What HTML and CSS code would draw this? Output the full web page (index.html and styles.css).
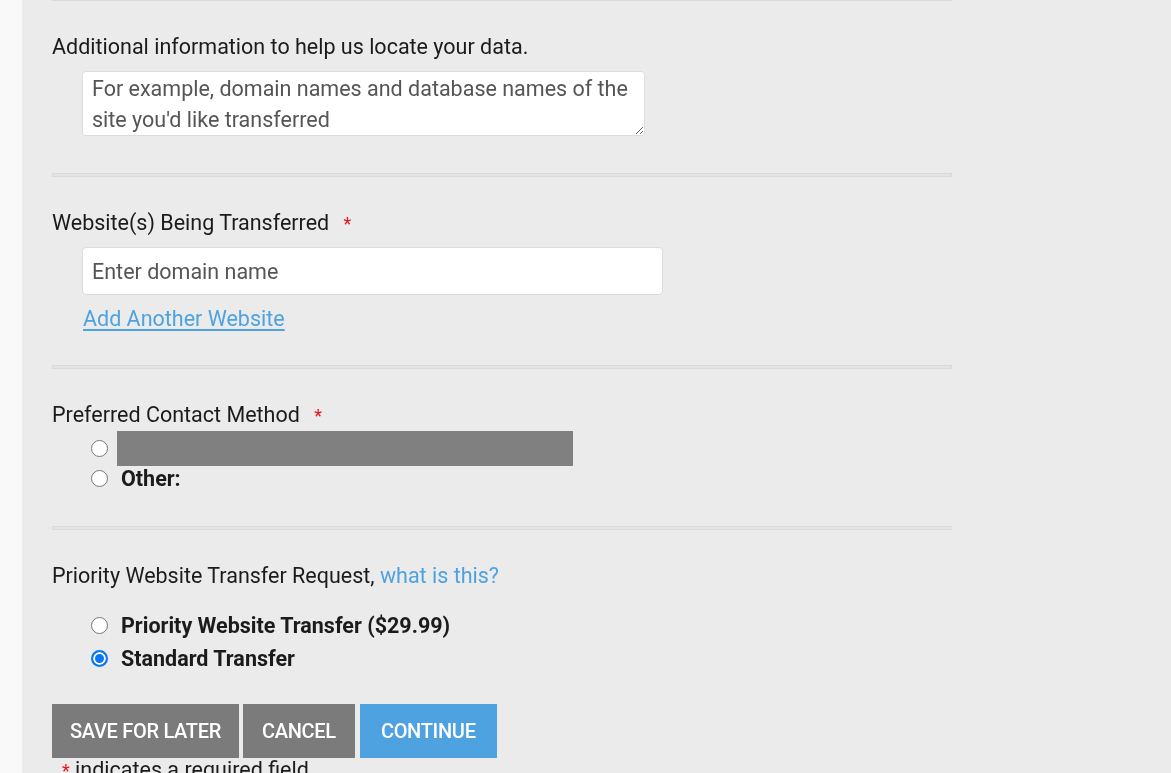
FILE: index.html
```html
<!doctype html>
<html>
<head>
    <link rel="stylesheet" href="styles.css">
</head>
<body>
    <div class="page">
        <div class="gutter"></div>
        <main class="panel">
            <hr class="rule rule-top">
            <section class="section section-first">
                <label class="field-label" for="notes">Additional information to help us locate your data.</label>
                <textarea id="notes" class="notes">For example, domain names and database names of the site you'd like transferred</textarea>
            </section>
            <hr class="rule">
            <section class="section section-site">
                <label class="field-label" for="domain">Website(s) Being Transferred <span class="req">*</span></label>
                <input id="domain" class="domain" type="text" placeholder="Enter domain name" />
                <a class="add-link" href="#">Add Another Website</a>
            </section>
            <hr class="rule">
            <section class="section">
                <div class="field-label">Preferred Contact Method <span class="req">*</span></div>
                <div class="options options-tight">
                    <label class="option"><input type="radio" name="contact" /><span class="redacted"></span></label>
                    <label class="option"><input type="radio" name="contact" /><span class="option-text">Other:</span></label>
                </div>
            </section>
            <hr class="rule">
            <section class="section section-last">
                <div class="field-label">Priority Website Transfer Request, <a class="help-link" href="#">what is this?</a></div>
                <div class="options options-spaced">
                    <label class="option"><input type="radio" name="priority" /><span class="option-text">Priority Website Transfer ($29.99)</span></label>
                    <label class="option"><input type="radio" name="priority" checked /><span class="option-text">Standard Transfer</span></label>
                </div>
                <div class="actions">
                    <button class="btn btn-gray" type="button">Save for later</button>
                    <button class="btn btn-gray" type="button">Cancel</button>
                    <button class="btn btn-blue" type="submit">Continue</button>
                </div>
                <p class="footnote"><span class="req">*</span> indicates a required field</p>
            </section>
        </main>
    </div>
</body>
</html>
```

FILE: styles.css
```css
html, body {
    margin: 0;
    height: 100%;
    overflow: hidden;
}
body {
    font-family: Roboto, "Liberation Sans", Arial, sans-serif;
    font-size: 21.5px;
    color: #1b1b1b;
    background: #ebebeb;
}
.page {
    display: flex;
    min-height: 100%;
}
.gutter {
    width: 22px;
    flex: none;
    background: #f9f9f9;
}
.panel {
    flex: 1;
    padding: 0 30px;
    background: #ebebeb;
}
.rule {
    width: 898px;
    height: 2px;
    margin: 0;
    border: 1px solid #dadada;
    background: #e4e4e4;
    box-sizing: content-box;
}
.rule-top {
    margin-top: -3px;
}
.section {
    width: 900px;
    padding: 34px 0 35px;
}
.section-first {
    padding-bottom: 37px;
}
.section-site {
    padding-bottom: 34px;
}
.section-site .field-label {
    margin-bottom: 11px;
}
.section-last {
    padding-bottom: 0;
}
.field-label {
    display: block;
    line-height: 24px;
    margin-bottom: 12px;
}
.req {
    color: #e8131a;
    margin-left: 9px;
    font-size: 18px;
}
.footnote .req {
    margin: 0;
}
.notes {
    display: block;
    box-sizing: border-box;
    width: 563px;
    height: 65px;
    margin-left: 30px;
    padding: 1px 9px;
    border: 1px solid #dcdcdc;
    border-radius: 4px;
    background: #fff;
    color: #555;
    font: inherit;
    line-height: 31px;
}
.domain {
    display: block;
    box-sizing: border-box;
    width: 581px;
    height: 48px;
    margin-left: 30px;
    padding: 0 9px;
    border: 1px solid #dcdcdc;
    border-radius: 4px;
    background: #fff;
    font: inherit;
    color: #555;
}
.domain::placeholder {
    color: #555;
}
.add-link {
    display: inline-block;
    margin: 12px 0 0 31px;
    line-height: 24px;
    color: #4ea3df;
    text-decoration: underline;
    text-decoration-thickness: 2px;
    text-underline-offset: 3px;
}
.help-link {
    color: #4ea3df;
    text-decoration: none;
}
.options {
    padding-left: 39px;
}
.options-tight {
    margin-top: -9px;
}
.options-spaced {
    margin-top: 21px;
}
.option {
    display: flex;
    align-items: center;
    min-height: 24px;
}
.options-spaced .option {
    height: 33px;
}
.option input {
    appearance: none;
    box-sizing: border-box;
    width: 17px;
    height: 17px;
    margin: 0 9px 0 0;
    flex: none;
    border: 1px solid #767676;
    border-radius: 50%;
    background: #fff;
}
.option input:checked {
    border: 2px solid #0a75f5;
    box-shadow: inset 0 0 0 2px #fff;
    background: #0a75f5;
}
.redacted {
    display: block;
    width: 456px;
    height: 35px;
    background: #808080;
}
.option-text {
    padding-left: 4px;
    font-weight: bold;
}
.actions {
    display: flex;
    gap: 4px;
    margin-top: 29px;
}
.btn {
    height: 54px;
    padding: 0 18px;
    border: 0;
    color: #fff;
    font: inherit;
    font-size: 20px;
    font-weight: 500;
    text-transform: uppercase;
    letter-spacing: -0.3px;
}
.btn-gray {
    background: #7b7b7b;
}
.btn-gray + .btn-gray {
    padding: 0 19px;
}
.btn-blue {
    margin-left: 1px;
    padding: 0 21px;
    background: #4fa2e0;
}
.footnote {
    margin: 0;
    padding-left: 10px;
    line-height: 24px;
}
```
